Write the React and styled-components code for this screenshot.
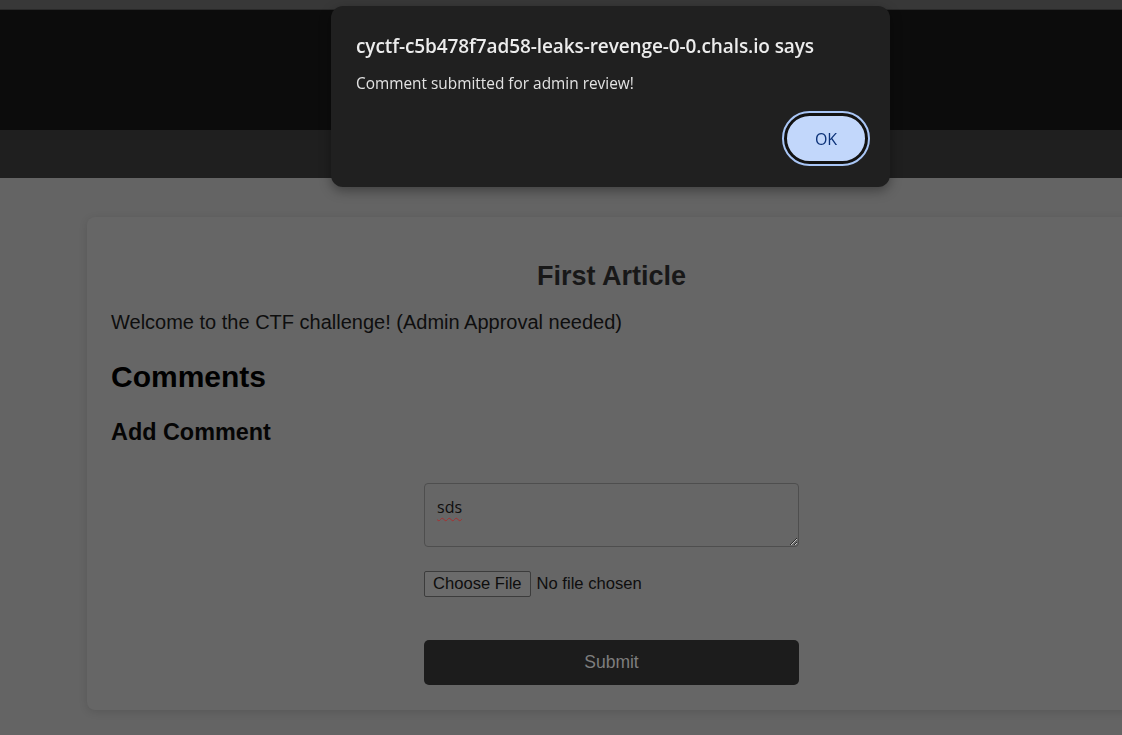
import React from 'react';
import styled, { createGlobalStyle } from 'styled-components';

const GlobalStyle = createGlobalStyle`
  html, body {
    margin: 0;
    padding: 0;
    background: #646464;
    overflow: hidden;
  }
  body {
    font-family: "Liberation Sans", Arial, sans-serif;
  }
`;

function App() {
  return (
    <>
      <GlobalStyle />
      <Page>
        <TopStrip />
        <Header />
        <NavBar />
        <Main>
          <Card>
            <Title>First Article</Title>
            <Intro>Welcome to the CTF challenge! (Admin Approval needed)</Intro>
            <SectionTitle>Comments</SectionTitle>
            <SubTitle>Add Comment</SubTitle>
            <CommentForm onSubmit={(e) => e.preventDefault()}>
              <CommentBox defaultValue="sds" spellCheck={false} />
              <FileRow>
                <FileButton type="button">Choose File</FileButton>
                <FileLabel>No file chosen</FileLabel>
              </FileRow>
              <SubmitBtn type="submit">Submit</SubmitBtn>
            </CommentForm>
          </Card>
        </Main>
      </Page>

      {/* alert dialog from the browser */}
      <Dialog>
        <DialogTitle>cyctf-c5b478f7ad58-leaks-revenge-0-0.chals.io says</DialogTitle>
        <DialogText>Comment submitted for admin review!</DialogText>
        <DialogActions>
          <OkButton>OK</OkButton>
        </DialogActions>
      </Dialog>
    </>
  );
}

const Page = styled.div`
  min-height: 735px;
  display: flex;
  flex-direction: column;
`;

const TopStrip = styled.div`
  height: 10px;
  background: #383838;
  border-bottom: 1px solid #2a2a2a;
  box-sizing: border-box;
`;

const Header = styled.header`
  height: 120px;
  background: #0c0c0c;
`;

const NavBar = styled.nav`
  height: 48px;
  background: #1f1f1f;
`;

const Main = styled.main`
  padding: 39px 0 25px 87px;
`;

const Card = styled.section`
  width: 1049px;
  box-sizing: border-box;
  padding: 24px 24px 25px;
  background: #666666;
  border-radius: 8px;
  box-shadow: 0 2px 8px rgba(0, 0, 0, 0.12);
  display: flex;
  flex-direction: column;
`;

const Title = styled.h1`
  margin: 20px 0 0;
  font-size: 27px;
  line-height: 31px;
  font-weight: 700;
  text-align: center;
  color: #181818;
`;

const Intro = styled.p`
  margin: 19px 0 0;
  font-size: 20px;
  line-height: 23px;
  color: #0e0e0e;
`;

const SectionTitle = styled.h2`
  margin: 25px 0 0;
  font-size: 30px;
  line-height: 35px;
  font-weight: 700;
  color: #000;
`;

const SubTitle = styled.h3`
  margin: 25px 0 0;
  font-size: 23.4px;
  line-height: 27px;
  font-weight: 700;
  color: #050505;
`;

const CommentForm = styled.form`
  align-self: center;
  width: 375px;
  margin-top: 37px;
  display: flex;
  flex-direction: column;
`;

const CommentBox = styled.textarea`
  width: 375px;
  height: 64px;
  box-sizing: border-box;
  padding: 13px 12px;
  background: #666666;
  border: 1px solid #4e4e4e;
  border-radius: 4px;
  font-family: "Open Sans", "Noto Sans", sans-serif;
  font-size: 16px;
  line-height: 20px;
  color: #0e0e0e;
  text-decoration: underline wavy #a33030;
  text-decoration-thickness: 1px;
  text-underline-offset: 4px;
  resize: vertical;
  outline: none;
`;

const FileRow = styled.div`
  margin-top: 24px;
  display: flex;
  align-items: center;
  gap: 6px;
  height: 26px;
`;

const FileButton = styled.button`
  height: 26px;
  padding: 0 8px;
  background: #6b6b6b;
  border: 1px solid #3c3c3c;
  border-radius: 2px;
  font-family: "Liberation Sans", Arial, sans-serif;
  font-size: 16.6px;
  color: #0e0e0e;
`;

const FileLabel = styled.span`
  font-size: 16.6px;
  color: #0e0e0e;
`;

const SubmitBtn = styled.button`
  margin-top: 43px;
  height: 45px;
  width: 100%;
  background: #1c1c1c;
  border: none;
  border-radius: 5px;
  font-family: "Liberation Sans", Arial, sans-serif;
  font-size: 17.5px;
  color: #7e7e7e;
`;

const Dialog = styled.div`
  position: fixed;
  left: 331px;
  top: 6px;
  width: 559px;
  height: 181px;
  box-sizing: border-box;
  padding: 28px 22px 0 25px;
  background: #202020;
  border-radius: 12px;
  box-shadow: 0 4px 12px rgba(0, 0, 0, 0.35);
  font-family: "Open Sans", "Noto Sans", sans-serif;
  display: flex;
  flex-direction: column;
`;

const DialogTitle = styled.div`
  font-size: 19px;
  line-height: 25px;
  font-weight: 600;
  letter-spacing: -0.1px;
  color: #ececec;
`;

const DialogText = styled.div`
  margin-top: 14px;
  font-size: 15.4px;
  line-height: 21px;
  color: #e2e2e2;
`;

const DialogActions = styled.div`
  margin-top: 19px;
  display: flex;
  justify-content: flex-end;
`;

const OkButton = styled.button`
  width: 84px;
  height: 51px;
  box-sizing: border-box;
  background: #c2d7fb;
  border: 3px solid #121212;
  border-radius: 999px;
  outline: 2px solid #a9c6f6;
  font-family: "Open Sans", "Noto Sans", sans-serif;
  font-size: 16px;
  font-weight: 500;
  color: #0c3278;
`;

export default App;
